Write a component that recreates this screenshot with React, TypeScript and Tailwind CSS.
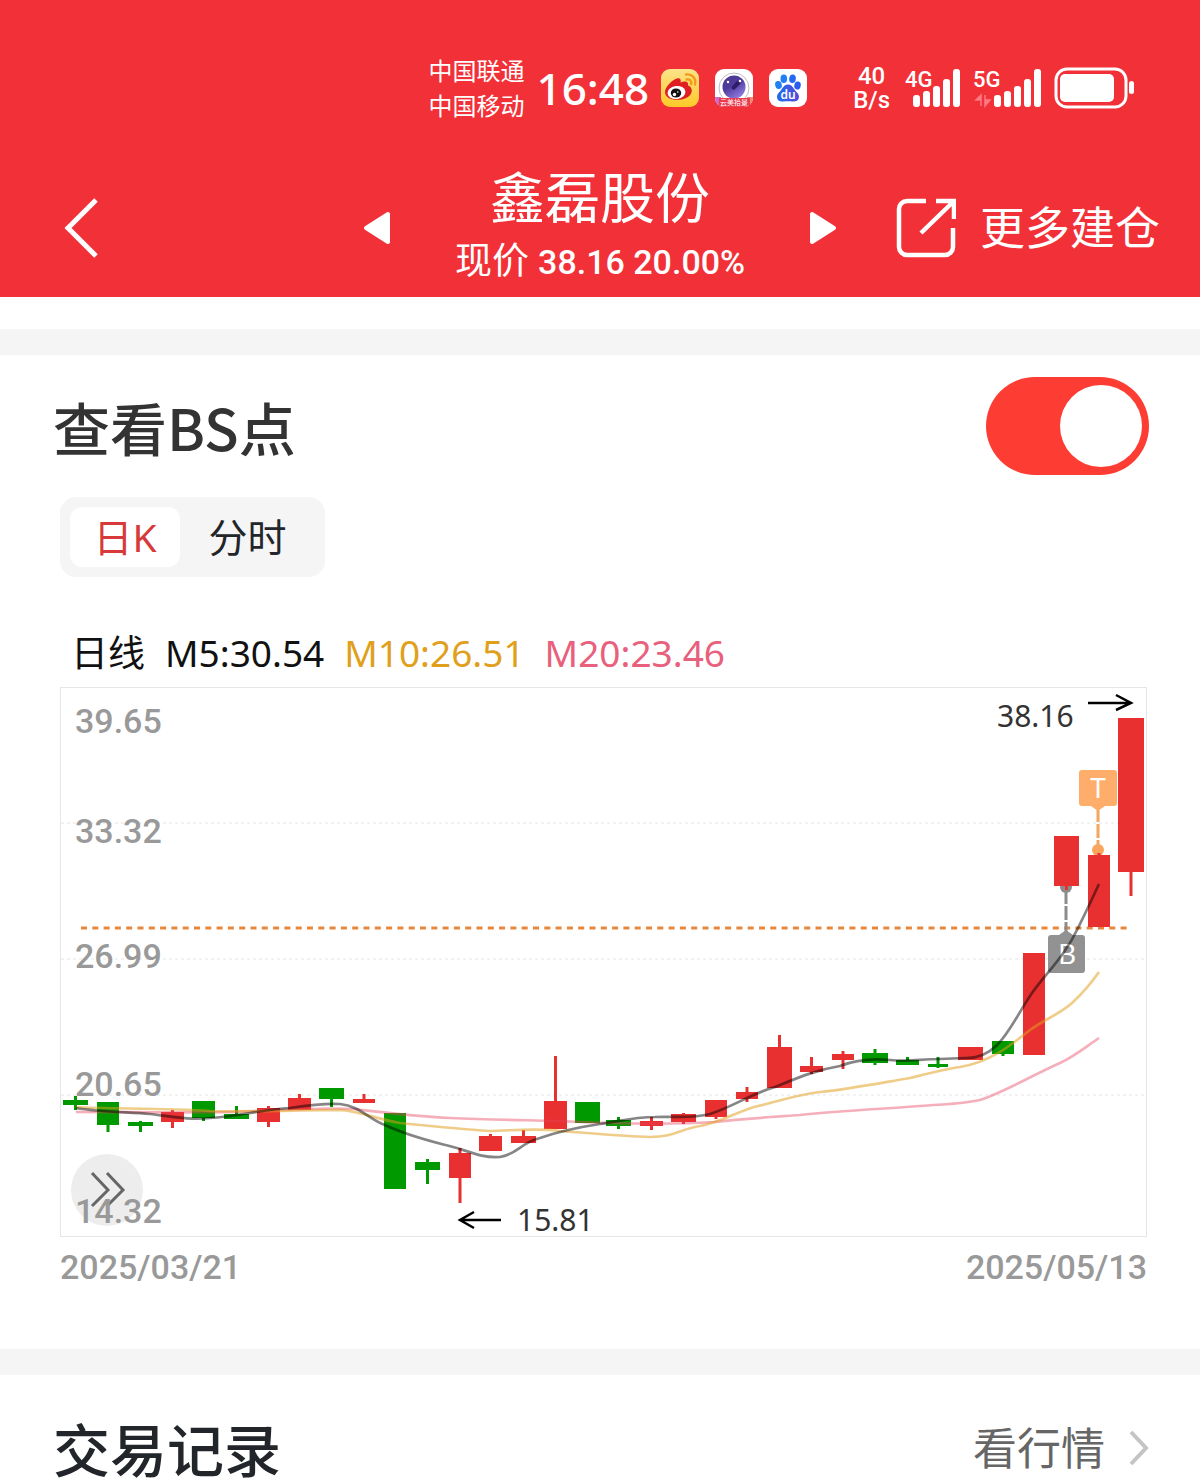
const CJK = 'font-["Noto_Sans","Noto_Sans_CJK_SC",sans-serif]'
const DIN = 'font-["Roboto","Noto_Sans_CJK_SC",sans-serif]'

type Candle = { x: number; w: number; top: number; bottom: number; high: number; low: number; up: boolean }

const UP = '#e83030'
const DOWN = '#009900'

const candles: Candle[] = [
  { x: 63, w: 25, top: 1100, bottom: 1105, high: 1096, low: 1110, up: false },
  { x: 97, w: 22, top: 1102, bottom: 1125, high: 1102, low: 1132, up: false },
  { x: 128, w: 25, top: 1122, bottom: 1126, high: 1121, low: 1132, up: false },
  { x: 161, w: 23, top: 1112, bottom: 1122, high: 1110, low: 1128, up: true },
  { x: 192, w: 23, top: 1101, bottom: 1118, high: 1101, low: 1121, up: false },
  { x: 224, w: 25, top: 1114, bottom: 1119, high: 1106, low: 1119, up: false },
  { x: 257, w: 23, top: 1108, bottom: 1122, high: 1106, low: 1127, up: true },
  { x: 288, w: 23, top: 1098, bottom: 1110, high: 1094, low: 1110, up: true },
  { x: 319, w: 25, top: 1088, bottom: 1099, high: 1088, low: 1107, up: false },
  { x: 353, w: 22, top: 1099, bottom: 1103, high: 1094, low: 1103, up: true },
  { x: 384, w: 22, top: 1113, bottom: 1189, high: 1113, low: 1189, up: false },
  { x: 415, w: 25, top: 1162, bottom: 1170, high: 1159, low: 1184, up: false },
  { x: 449, w: 22, top: 1153, bottom: 1178, high: 1148, low: 1203, up: true },
  { x: 479, w: 23, top: 1136, bottom: 1151, high: 1134, low: 1151, up: true },
  { x: 511, w: 25, top: 1136, bottom: 1143, high: 1130, low: 1143, up: true },
  { x: 544, w: 23, top: 1101, bottom: 1129, high: 1056, low: 1129, up: true },
  { x: 575, w: 25, top: 1102, bottom: 1123, high: 1102, low: 1123, up: false },
  { x: 606, w: 25, top: 1120, bottom: 1126, high: 1117, low: 1129, up: false },
  { x: 640, w: 23, top: 1121, bottom: 1126, high: 1117, low: 1130, up: true },
  { x: 671, w: 25, top: 1114, bottom: 1122, high: 1113, low: 1124, up: true },
  { x: 705, w: 22, top: 1100, bottom: 1117, high: 1100, low: 1119, up: true },
  { x: 736, w: 22, top: 1092, bottom: 1099, high: 1087, low: 1102, up: true },
  { x: 767, w: 25, top: 1047, bottom: 1088, high: 1035, low: 1088, up: true },
  { x: 800, w: 23, top: 1066, bottom: 1072, high: 1057, low: 1074, up: true },
  { x: 832, w: 22, top: 1054, bottom: 1060, high: 1051, low: 1069, up: true },
  { x: 862, w: 26, top: 1053, bottom: 1063, high: 1049, low: 1065, up: false },
  { x: 896, w: 23, top: 1060, bottom: 1065, high: 1057, low: 1065, up: false },
  { x: 928, w: 20, top: 1064, bottom: 1067, high: 1057, low: 1068, up: false },
  { x: 958, w: 25, top: 1047, bottom: 1060, high: 1047, low: 1060, up: true },
  { x: 992, w: 22, top: 1041, bottom: 1054, high: 1041, low: 1056, up: false },
  { x: 1023, w: 22, top: 953, bottom: 1055, high: 953, low: 1055, up: true },
  { x: 1054, w: 25, top: 836, bottom: 886, high: 836, low: 890, up: true },
  { x: 1088, w: 22, top: 855, bottom: 927, high: 853, low: 927, up: true },
  { x: 1118, w: 26, top: 718, bottom: 872, high: 718, low: 896, up: true },
]

const axis = [
  { label: '39.65', y: 733 },
  { label: '33.32', y: 843 },
  { label: '26.99', y: 968 },
  { label: '20.65', y: 1096 },
  { label: '14.32', y: 1223 },
]

function WeiboIcon() {
  return (
    <svg viewBox="0 0 38 38" className="size-[38px]" aria-label="微博">
      <defs>
        <linearGradient id="wb" x1="0" y1="0" x2="0" y2="1">
          <stop offset="0" stopColor="#fbe389" />
          <stop offset="1" stopColor="#ffc928" />
        </linearGradient>
      </defs>
      <rect width="38" height="38" rx="9" fill="url(#wb)" />
      <path d="M4 23c0-5 7-12 12-13.500 3-.8 4.500 1 3.500 4 4-2 8.500-1.500 7.500 3 5 1.500 5 8 0 11.500-8 5-23 3.500-23-5z" fill="#e01f22" />
      <ellipse cx="15.500" cy="23.500" rx="9" ry="6.500" fill="#fff" transform="rotate(-8 15.500 23.500)" />
      <ellipse cx="15" cy="24" rx="5.200" ry="4.600" fill="#111" />
      <circle cx="13.500" cy="25.500" r="1.700" fill="#fff" />
      <circle cx="16.800" cy="23" r="0.800" fill="#fff" />
      <path d="M25 5.500c6-1 10.500 4 9 10M25.500 10.500c3.500-.5 5.500 1.500 4.500 4.500" fill="none" stroke="#f39a1c" strokeWidth="2.400" strokeLinecap="round" />
    </svg>
  )
}

function LensIcon() {
  return (
    <svg viewBox="0 0 38 38" className="size-[38px]" aria-label="云美拾景">
      <defs>
        <linearGradient id="lens" x1="0" y1="0" x2="0.600" y2="1">
          <stop offset="0" stopColor="#4a3a90" />
          <stop offset="0.500" stopColor="#4f3a9c" />
          <stop offset="1" stopColor="#8d78dc" />
        </linearGradient>
        <clipPath id="lensClip"><rect width="38" height="38" rx="9" /></clipPath>
      </defs>
      <g clipPath="url(#lensClip)">
        <rect width="38" height="38" fill="#fff" />
        <circle cx="19" cy="19" r="15" fill="none" stroke="#a9a9b8" strokeWidth="0.800" />
        <circle cx="19" cy="18" r="11.500" fill="url(#lens)" />
        <path d="M16 19l6-7 4 2-7 7z" fill="#2c1d66" />
        <circle cx="13" cy="13" r="1.200" fill="#fff" />
        <circle cx="25" cy="12" r="1.200" fill="#fff" />
        <path d="M0 28h6v10H0z" fill="#c86ad0" />
        <path d="M32 28h6v10h-6z" fill="#f08a7a" />
        <rect x="4" y="29" width="31" height="9" fill="#ea3a4c" />
        <text x="19" y="36" textAnchor="middle" fontSize="7" fill="#fff">云美拾景</text>
      </g>
    </svg>
  )
}

function BaiduIcon() {
  return (
    <svg viewBox="0 0 38 38" className="size-[38px]" aria-label="百度">
      <defs>
        <linearGradient id="bd" x1="0" y1="0" x2="1" y2="0">
          <stop offset="0" stopColor="#1c6cf0" />
          <stop offset="1" stopColor="#5a4ad8" />
        </linearGradient>
      </defs>
      <rect width="38" height="38" rx="9" fill="#fff" />
      <ellipse cx="9.500" cy="16" rx="3.300" ry="4" fill="#2080f4" transform="rotate(-14 9.500 16)" />
      <ellipse cx="14.800" cy="9.800" rx="3.300" ry="4.300" fill="#2080f4" />
      <ellipse cx="23.500" cy="9.800" rx="3.300" ry="4.300" fill="#2468f2" transform="rotate(8 23.500 9.800)" />
      <ellipse cx="28.500" cy="16.500" rx="3.200" ry="4" fill="#2a5cf0" transform="rotate(12 28.500 16.500)" />
      <path d="M19 15.500c4.500 0 5.500 4.500 8.500 7.500 5 4.500 2 10.500-4 9.500-3-.5-6-.5-9 0-6 1-9-5-4-9.500 3-3 4-7.500 8.500-7.500z" fill="url(#bd)" />
      <text x="19" y="30" textAnchor="middle" fontSize="12" fontWeight="600" fill="#fff">du</text>
    </svg>
  )
}

function Bars({ x }: { x: number }) {
  return (
    <g fill="#fff">
      <rect x={x} y="28" width="7" height="12" rx="3" />
      <rect x={x + 10} y="24" width="7" height="16" rx="3" />
      <rect x={x + 20} y="19" width="7" height="21" rx="3" />
      <rect x={x + 30} y="12" width="7" height="28" rx="3" />
      <rect x={x + 40} y="2" width="7" height="38" rx="3" />
    </g>
  )
}

function Signal({ label, data }: { label: string; data?: boolean }) {
  return (
    <svg viewBox="0 0 68 42" className="h-[42px] w-[68px] overflow-visible" aria-label={label}>
      <text x="-1" y="20" fontSize="22" fontWeight="500" fill="#fff">{label}</text>
      <Bars x={data ? 20 : 7} />
      {data && <path d="M7 39V28l-5 5h5M11 28v11l5-6h-5" fill="#ff7a84" stroke="#ff7a84" strokeWidth="1.500" />}
    </svg>
  )
}

function StatusBar() {
  return (
    <div className={`${CJK} flex h-[78px] items-center justify-end pr-16 text-white`}>
      <div className="mr-3 text-2xl leading-[35px]">
        <div>中国联通</div>
        <div>中国移动</div>
      </div>
      <div className="mr-3 text-[44px] leading-none font-medium">16:48</div>
      <div className="flex gap-4">
        <WeiboIcon />
        <LensIcon />
        <BaiduIcon />
      </div>
      <div className={`${DIN} mr-4 ml-[46px] text-center text-2xl leading-6 font-medium`}>
        <div>40</div>
        <div>B/s</div>
      </div>
      <div className={`${DIN} flex`}>
        <Signal label="4G" />
        <Signal label="5G" data />
      </div>
      <svg viewBox="0 0 82 42" className="ml-3 h-[42px] w-[82px]" aria-label="电量">
        <rect x="2" y="2" width="70" height="38" rx="11" fill="none" stroke="#fff" strokeWidth="3" />
        <rect x="6" y="7" width="54" height="28" rx="5" fill="#fff" />
        <rect x="75" y="14" width="5" height="13" rx="2.500" fill="#fff" />
      </svg>
    </div>
  )
}

function Header() {
  return (
    <header className="bg-[#f23037] pt-[49px] pb-0.5 text-white">
      <StatusBar />
      <div className="mt-[38px] grid grid-cols-[minmax(0,1fr)_auto_minmax(0,1fr)] items-center px-10">
        <button aria-label="返回" className="mb-1 ml-6 justify-self-start">
          <svg viewBox="0 0 36 60" className="h-[60px] w-9">
            <path d="M32 2L4 30l28 28" fill="none" stroke="#fff" strokeWidth="5" />
          </svg>
        </button>
        <div className="flex items-center gap-16">
          <button aria-label="上一只" className="mb-1">
            <svg viewBox="0 0 28 34" className="h-[34px] w-7">
              <path d="M3 17L25 3v28z" fill="#fff" stroke="#fff" strokeWidth="4" strokeLinejoin="round" />
            </svg>
          </button>
          <div className="text-center">
            <h1 className={`${CJK} text-[55px] leading-[64px]`}>鑫磊股份</h1>
            <p className={`${DIN} text-[37px] leading-[66px]`}>
              现价 <span className="text-[34px] font-medium">38.16 20.00%</span>
            </p>
          </div>
          <button aria-label="下一只" className="mb-1">
            <svg viewBox="0 0 28 34" className="h-[34px] w-7">
              <path d="M25 17L3 3v28z" fill="#fff" stroke="#fff" strokeWidth="4" strokeLinejoin="round" />
            </svg>
          </button>
        </div>
        <button className={`${CJK} mb-1 flex items-center gap-6 justify-self-end text-[45px] leading-[60px] whitespace-nowrap`}>
          <svg viewBox="0 0 60 60" className="size-[60px]" fill="none" stroke="#fff" strokeWidth="4.500">
            <path d="M30 3H11a8 8 0 0 0-8 8v38a8 8 0 0 0 8 8h38a8 8 0 0 0 8-8V30" />
            <path d="M40 3h18v18M57 4L25 35" />
          </svg>
          更多建仓
        </button>
      </div>
    </header>
  )
}

function Chart() {
  return (
    <svg viewBox="60 687 1087 550" className={`${CJK} block h-auto w-full`} role="img" aria-label="日K线图">
      <rect x="60.500" y="687.500" width="1086" height="549" fill="none" stroke="#e6e6e6" />
      <g stroke="#eeeeee" strokeWidth="1.500" strokeDasharray="3 3">
        <path d="M61 823H1146M61 959H1146M61 1095H1146" />
      </g>
      <circle cx="107" cy="1190" r="36" fill="#ededed" />
      <path d="M92 1173l16 17-16 16M107 1173l16 17-16 16" fill="none" stroke="#666" strokeWidth="3" />
      <g className={DIN} fontSize="34" fontWeight="500" fill="#999">
        {axis.map((a) => (
          <text key={a.label} x="75" y={a.y}>{a.label}</text>
        ))}
      </g>
      <path d="M81 928H1131" stroke="#e6873c" strokeWidth="3" strokeDasharray="6 5.300" />
      <circle cx="1066" cy="887" r="6" fill="#8c8c8c" />
      <circle cx="1098" cy="850" r="6" fill="#fba45c" />
      {candles.map((c) => (
        <g key={c.x} fill={c.up ? UP : DOWN}>
          <rect x={c.x} y={c.top} width={c.w} height={c.bottom - c.top} />
          <rect x={c.x + c.w / 2 - 1.5} y={c.high} width="3" height={c.low - c.high} />
        </g>
      ))}
      <path d="M1066 890V934" stroke="#8c8c8c" strokeWidth="3" strokeDasharray="14 2" />
      <path d="M1098 808V846" stroke="#f3a65c" strokeWidth="3" strokeDasharray="14 2" />
      <path d="M1051 935h8l7-5 7 5h9a3 3 0 0 1 3 3v32a3 3 0 0 1-3 3h-31a3 3 0 0 1-3-3v-32a3 3 0 0 1 3-3z" fill="#929292" />
      <path d="M1082 770h32a3 3 0 0 1 3 3v30a3 3 0 0 1-3 3h-9l-7 5-7-5h-9a3 3 0 0 1-3-3v-30a3 3 0 0 1 3-3z" fill="#ffad6b" />
      <g fontSize="28" fill="#fff" textAnchor="middle">
        <text x="1067" y="964">B</text>
        <text x="1098" y="798">T</text>
      </g>
      <g fill="none" strokeWidth="2.700" strokeLinejoin="round">
        <path
          d="M76 1112C130 1112 170 1113 235 1112C290 1110 320 1107 353 1109C380 1112 410 1116 450 1118C490 1120 520 1120 560 1121C620 1124 680 1124 714 1122C740 1119 770 1117 800 1115C840 1111 880 1109 920 1106C945 1104 968 1104 983 1099C1010 1089 1035 1074 1060 1063C1075 1056 1087 1046 1099 1038"
          stroke="#e8405a"
          strokeOpacity="0.420"
        />
        <path
          d="M76 1107C110 1109 160 1108 210 1111C260 1112 300 1110 340 1110C365 1112 375 1119 400 1123C430 1126 460 1129 490 1131C520 1130 540 1128 560 1131C590 1133 620 1136 650 1137C675 1137 680 1129 700 1126C725 1121 735 1112 758 1106C780 1101 795 1095 820 1092C850 1089 880 1083 910 1078C930 1073 945 1069 960 1067C990 1062 1010 1046 1030 1030C1045 1019 1060 1014 1072 1003C1084 992 1092 982 1099 972"
          stroke="#e0a01c"
          strokeOpacity="0.520"
        />
        <path
          d="M76 1108C100 1112 125 1112 150 1114C175 1117 190 1120 210 1118C235 1117 260 1110 290 1108C310 1105 325 1103 340 1104C360 1106 370 1120 385 1125C410 1137 435 1142 460 1149C475 1154 485 1158 500 1157C518 1154 520 1143 540 1138C560 1131 580 1127 600 1124C620 1121 635 1117 655 1117C675 1116 690 1119 710 1114C735 1106 750 1094 775 1087C795 1079 815 1070 840 1066C855 1060 870 1058 890 1060C910 1062 920 1059 940 1059L965 1058C1000 1059 1010 1025 1032 993C1046 973 1065 956 1078 928C1087 910 1093 897 1099 884"
          stroke="#000"
          strokeOpacity="0.480"
        />
      </g>
      <g fill="none" stroke="#000" strokeWidth="2.500">
        <path d="M1088 703h42M1116 695l15 8-15 7" />
        <path d="M501 1220h-41M474 1212l-14 8 14 8" />
      </g>
      <g fontSize="30" fill="#333">
        <text x="997" y="727">38.16</text>
        <text x="517" y="1231">15.81</text>
      </g>
    </svg>
  )
}

export default function App() {
  return (
    <div className={`${CJK} bg-white`}>
      <Header />
      <main>
        <div className="mt-8 h-[26px] bg-[#f5f5f5]" />
        <section className="pt-[22px] pr-[51px] pb-[52px] pl-[53px]">
          <div className="flex items-center justify-between">
            <h2 id="bs-title" className='font-["Noto_Sans_CJK_SC",sans-serif] text-[57px] leading-[94px] font-medium text-[#333]'>
              查看BS点
            </h2>
            <label className="relative block h-[98px] w-[163px] cursor-pointer">
              <input type="checkbox" role="switch" defaultChecked aria-labelledby="bs-title" className="peer sr-only" />
              <span className="block size-full rounded-full bg-gray-300 peer-checked:bg-[#fd3c33]" />
              <span className="absolute top-2 left-2 size-[82px] rounded-full bg-white peer-checked:right-[7px] peer-checked:left-auto" />
            </label>
          </div>
          <div className="mt-[22px] ml-[7px] inline-flex rounded-2xl bg-[#f5f5f5] p-2.5 text-[39px] leading-[60px]">
            <button className="w-[110px] rounded-xl bg-white text-[#d63a3a]">日K</button>
            <button className="w-[135px] text-[#222529]">分时</button>
          </div>
          <div className="mt-11 ml-[18px] flex gap-5 pb-0.5 text-[37px] leading-[64px]">
            <span className="text-[#111]">日线</span>
            <span className="text-[#111]">M5:30.54</span>
            <span className="text-[#e0a01c]">M10:26.51</span>
            <span className="text-[#e8607c]">M20:23.46</span>
          </div>
          <div className="pr-0.5 pl-[7px]">
            <Chart />
            <div className={`${DIN} flex justify-between text-[34px] leading-[60px] font-medium text-[#999]`}>
              <span>2025/03/21</span>
              <span>2025/05/13</span>
            </div>
          </div>
        </section>
        <div className="h-[26px] bg-[#f5f5f5]" />
        <section className="flex items-start justify-between pt-[43px] pr-[51px] pl-[53px]">
          <h2 className="text-[57px] leading-[64px] font-medium text-[#222529]">交易记录</h2>
          <a href="#market" className="flex items-center gap-6 text-[44px] leading-[60px] text-[#666]">
            看行情
            <svg viewBox="0 0 20 36" className="h-9 w-5">
              <path d="M2 2l15 16L2 34" fill="none" stroke="#c4c4c4" strokeWidth="4" />
            </svg>
          </a>
        </section>
      </main>
    </div>
  )
}
